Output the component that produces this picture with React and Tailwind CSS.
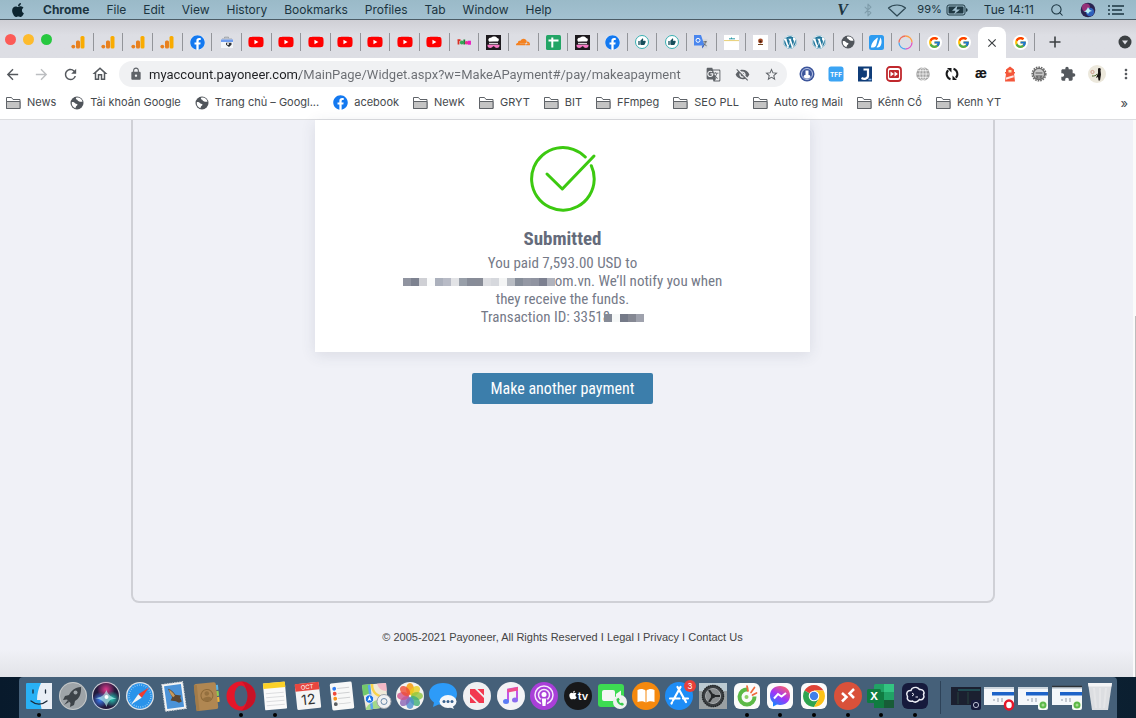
/**
 * App.jsx
 * Desktop view: menu bar, browser window with the payment confirmation, dock.
 */

import { Bluetooth, Search } from 'lucide-react'
import { FaApple, FaFacebook, FaWordpress, FaYoutube } from 'react-icons/fa'
import { FcGoogle } from 'react-icons/fc'
import { SiCloudflare } from 'react-icons/si'
import {
  MdArrowBack,
  MdArrowForward,
  MdClose,
  MdExtension,
  MdGTranslate,
  MdLock,
  MdMoreVert,
  MdOutlineHome,
  MdRefresh,
  MdStarOutline,
  MdThumbUp,
  MdVisibilityOff,
} from 'react-icons/md'

/* ---------- small icons ---------- */

const Analytics = () => (
  <svg viewBox="0 0 14 14" className="size-3.5">
    <rect x="9.5" y="1" width="4" height="12.5" rx="1.5" fill="#f9ab00" />
    <rect x="5" y="5.5" width="4" height="8" rx="1.5" fill="#e8801e" />
    <circle cx="2.3" cy="11.6" r="1.9" fill="#e8801e" />
  </svg>
)

const Facebook = () => (
  <span className="rounded-full bg-white">
    <FaFacebook className="size-[15px] text-[#1479f0]" />
  </span>
)

const StoreBag = () => (
  <svg viewBox="0 0 14 14" className="size-3.5">
    <path d="M4.500 3.500V2.200h4v1.300" fill="none" stroke="#9aa0a6" strokeWidth="1" />
    <path d="M1 5h12v8H1z" fill="#f4f6f8" />
    <path d="M2 3.200h10v1.300H2z" fill="#b6bcc4" />
    <path d="M1 4.500h12v2.500H1z" fill="#6f9df0" />
    <path d="M6 7.800h5.500v2L9 12 6 9.800z" fill="#30343a" />
    <circle cx="8" cy="9" r="1" fill="#fff" />
  </svg>
)

const Youtube = () => (
  <span className="relative flex items-center justify-center">
    <span className="absolute size-1.5 bg-white" />
    <FaYoutube className="relative size-4 text-[#ff0000]" />
  </span>
)

const ColorWord = () => (
  <svg viewBox="0 0 14 14" className="size-3.5">
    <path d="M1.500 4.500v5M.5 5.200h3" stroke="#d93025" strokeWidth="1.800" />
    <circle cx="4.800" cy="7.500" r="1.900" fill="#34a853" />
    <path d="M7.300 4.500v5" stroke="#188038" strokeWidth="1.800" />
    <circle cx="9.500" cy="7.700" r="1.800" fill="#e9348a" />
    <path d="M11.500 9.800V6.500h1.600v3.300" fill="none" stroke="#e91ec0" strokeWidth="1.700" />
  </svg>
)

const ChefFace = () => (
  <svg viewBox="0 0 15 15" className="size-[15px]">
    <rect width="15" height="15" fill="#1d1a1e" />
    <path d="M3 6.500C1.500 4.500 3 2.500 5 2.800 6.500 1 10.500 1 11 3c2.200.1 2.300 2.400 1 3.500z" fill="#fff" />
    <path d="M3 6.500l9 1v1.800H3z" fill="#e9e6ea" />
    <path d="M3 7.600h9" stroke="#1d1a1e" strokeWidth="1" />
    <path d="M1.500 9.800h12v1.200c-.5 2.500-4.300 2.500-5.300.3H7c-1 2.200-5 2.200-5.500-.3z" fill="#f779c4" />
  </svg>
)

const Sheet = () => (
  <svg viewBox="0 0 15 15" className="size-[15px]">
    <rect width="15" height="15" rx="1.500" fill="#23a566" />
    <path d="M2.500 5.600h10M6.300 2.500v10" stroke="#fff" strokeWidth="2" />
  </svg>
)

const LikeBadge = () => (
  <span className="flex size-3.5 items-center justify-center rounded-full border border-[#38b1b3] bg-white">
    <MdThumbUp className="size-2 text-[#164e5c]" />
  </span>
)

const Translate = () => (
  <svg viewBox="0 0 14 14" className="size-3.5">
    <path d="M6 4h7.500v9.500H8z" fill="#d5d8dc" />
    <path d="M0 0h7l3.500 10.500H0z" fill="#4a86ee" />
    <circle cx="4" cy="5.300" r="2" fill="none" stroke="#fff" strokeWidth="1" />
    <path d="M8 13.500l.3-3h2.200z" fill="#2a56c6" />
    <path d="M9.300 6.800h3.700M11.300 6v1c0 1.800-.8 2.800-2 3.700M10 8.500c.6 1 1.400 1.800 2.600 2.300" fill="none" stroke="#5f6368" strokeWidth=".9" />
  </svg>
)

const PageThumb = () => (
  <svg viewBox="0 0 15 15" className="size-[15px]">
    <rect width="15" height="15" fill="#fff" />
    <path d="M5 3.800h6M7.500 2.500v1.500" fill="none" stroke="#2f9aa8" strokeWidth="1" />
    <path d="M0 5.600h15" stroke="#e8cf74" strokeWidth="1" />
  </svg>
)

const Emblem = () => (
  <svg viewBox="0 0 15 15" className="size-[15px]">
    <rect width="15" height="15" fill="#fff" />
    <circle cx="7.500" cy="6" r="2.400" fill="#a34a26" />
    <circle cx="7.500" cy="6.500" r="1.100" fill="#3a1c10" />
    <path d="M5 9.500h5" stroke="#70431e" strokeWidth="1" />
  </svg>
)

const Wordpress = () => (
  <span className="rounded-full bg-white">
    <FaWordpress className="size-3.5 text-[#21759b]" />
  </span>
)

const Globe = () => (
  <svg viewBox="0 0 14 14" className="size-3.5 shrink-0">
    <circle cx="7" cy="7" r="6.500" fill="#50555b" />
    <path d="M1.800 6.200c1.700-.4 2.600.5 3.500 1.200 1 .5 2.200.4 2.200 1.300 0 .9-1.500 1.200-1.700 2.300l-.4 1.200C3 11.400 1.300 9 1.800 6.200z" fill="#fff" />
    <path d="M6.500 1.600c-.9.8-.8 1.800.2 1.900.9.100.6 1.100 1.500 1.400.9.200 1.300.9 2.200.9h2.100c-.5-2.700-3-4.800-6-4.200z" fill="#fff" />
  </svg>
)

const BlueSwoosh = () => (
  <svg viewBox="0 0 15 15" className="size-[15px]">
    <rect width="15" height="15" rx="2.500" fill="#2d9bf0" />
    <path d="M2 12.500C2 9 5 4.500 9 2.500L7.500 9c-.4 2-1.500 3.500-3.500 3.500z" fill="#fff" />
    <path d="M9 10l2.500-7.500c1.500 2.500 1.500 7-.5 9-1 1-3 1.200-3.500.8z" fill="#fff" />
  </svg>
)

const Ring = () => (
  <svg viewBox="0 0 15 15" className="size-[15px]" fill="none" strokeWidth="1.300">
    <path d="M7.500 1A6.500 6.500 0 0 1 14 7.500" stroke="#ff9f43" />
    <path d="M14 7.500A6.500 6.500 0 0 1 7.500 14" stroke="#e056c8" />
    <path d="M7.500 14A6.500 6.500 0 0 1 1 7.500" stroke="#4aa8f0" />
    <path d="M1 7.500A6.500 6.500 0 0 1 7.500 1" stroke="#f0705a" />
  </svg>
)

const Google = () => (
  <span className="flex size-[15px] items-center justify-center rounded-full bg-white">
    <FcGoogle className="size-[13px]" />
  </span>
)

const Cloudflare = () => <SiCloudflare className="size-3.5 text-[#f48120]" />

const Folder = () => (
  <svg viewBox="0 0 15 14" className="h-3.5 w-[15px] shrink-0">
    <path d="M.5 12.500v-11h5l1.500 2h7v9z" fill="#fff" stroke="#5f6368" strokeWidth="1" />
    <path d="M.5 5.500H14v7H.5z" fill="#c4c4c4" stroke="#5f6368" strokeWidth="1" />
  </svg>
)

const Siri = () => (
  <svg viewBox="0 0 16 16" className="size-4">
    <circle cx="8" cy="8" r="7.300" fill="#2a2350" />
    <circle cx="6" cy="5.500" r="4" fill="#a8347f" opacity=".85" />
    <circle cx="10" cy="10" r="4.200" fill="#2f6fd6" opacity=".8" />
    <path d="M3.500 9.500C6 9 7 7.500 8 5c1 2.500 2 3.500 4.500 4-2.500.2-3.500 1-4.500 3-.8-1.700-2-2.500-4.500-2.500z" fill="#b9f2f4" />
  </svg>
)

/* ---------- menu bar ---------- */

const menus = ['File', 'Edit', 'View', 'History', 'Bookmarks', 'Profiles', 'Tab', 'Window', 'Help']

const MenuBar = () => (
  <header className="flex h-5 items-center justify-between border-b border-[#4b5c66] bg-linear-to-b from-[#9abac8] to-[#a3c1d1] pr-3 pl-2.5 text-xs text-[#1b3440]">
    <nav className="flex items-center gap-[17px]">
      <button aria-label="Apple menu">
        <FaApple className="size-4 text-[#0d2530]" />
      </button>
      <button className="font-bold">Chrome</button>
      {menus.map((m) => (
        <button key={m}>{m}</button>
      ))}
    </nav>
    <div className="flex items-center">
      <span className="w-6 font-['Liberation_Serif',serif] text-base leading-4 font-bold italic">V</span>
      <Bluetooth className="mr-3 size-3.5 text-[#7f9dab]" strokeWidth={2} />
      <svg viewBox="0 0 20 14" className="mr-2.5 h-3.5 w-5" fill="none" stroke="#2e4854" strokeWidth="1.200">
        <path d="M1.500 5c4.500-4 12.500-4 17 0L10 13z" strokeLinejoin="round" />
      </svg>
      <span className="mr-1 text-[11px]">99%</span>
      <svg viewBox="0 0 22 12" className="mr-4 h-3 w-[22px]">
        <rect x="1" y="1" width="18" height="10" rx="2" fill="none" stroke="#1f3843" strokeWidth="1" />
        <rect x="2.500" y="2.500" width="15" height="7" rx="1" fill="#1f3843" />
        <path d="M20 4v4l1.500-1V5z" fill="#1f3843" />
        <path d="M11.500 1.500L6 6.700h3.500L8 10.500l6-5h-3.500z" fill="#a3c1d1" />
      </svg>
      <span className="mr-4">Tue 14:11</span>
      <Search className="mr-4 size-3.5" strokeWidth={1.800} />
      <span className="mr-3"><Siri /></span>
      <svg viewBox="0 0 16 12" className="h-3 w-4" stroke="#1b3440" strokeWidth="1.500">
        <path d="M0 2h2M0 6h2M0 10h2M4 2h12M4 6h10M4 10h12" />
      </svg>
    </div>
  </header>
)

/* ---------- tab strip ---------- */

const wideTabs = [
  Analytics, Analytics, Analytics, Analytics, Facebook, StoreBag,
  Youtube, Youtube, Youtube, Youtube, Youtube, Youtube, Youtube,
  ColorWord, ChefFace, Cloudflare, Sheet, ChefFace, Facebook,
  LikeBadge, LikeBadge, Translate, PageThumb, Emblem,
]
const narrowTabs = [Wordpress, Wordpress, Globe, BlueSwoosh, Ring, Google, Google, null, Google]

const Tab = ({ icon: Icon, last }) =>
  Icon ? (
    <button
      aria-label="Tab"
      className={`flex h-[18px] min-w-0 flex-1 items-center justify-center border-r ${last ? 'border-transparent' : 'border-[#93959a]'}`}
    >
      <Icon />
    </button>
  ) : (
    <button
      aria-label="Close tab"
      className="flex h-[31px] min-w-0 flex-1 items-center justify-center self-end rounded-t-lg bg-white text-[#3c4043]"
    >
      <MdClose className="size-3.5" />
    </button>
  )

const TabStrip = () => (
  <div className="flex h-[38px] items-end bg-linear-to-b from-[#cfcfd5] to-[#dddee4] to-40%">
    <div className="flex h-[38px] w-16 shrink-0 items-center gap-[7px] pl-[5px]">
      <button aria-label="Close window" className="size-[11px] rounded-full bg-[#fc5b57]" />
      <button aria-label="Minimize window" className="size-[11px] rounded-full bg-[#fdbb2d]" />
      <button aria-label="Zoom window" className="size-[11px] rounded-full bg-[#27c840]" />
    </div>
    <div className="flex h-8 grow-[712] basis-0 items-center">
      {wideTabs.map((icon, i) => (
        <Tab key={i} icon={icon} />
      ))}
    </div>
    <div className="flex h-8 grow-[259] basis-0 items-center">
      {narrowTabs.map((icon, i) => (
        <Tab key={i} icon={icon} last={i === 6} />
      ))}
    </div>
    <div className="flex h-8 w-[101px] shrink-0 items-center justify-between pr-1 pl-3.5">
      <button aria-label="New tab">
        <svg viewBox="0 0 12 12" className="size-3" stroke="#3c4043" strokeWidth="1.600">
          <path d="M6 .5v11M.5 6h11" />
        </svg>
      </button>
      <button aria-label="Search tabs">
        <svg viewBox="0 0 14 14" className="size-3.5">
          <circle cx="7" cy="7" r="6.500" fill="#3c4043" />
          <path d="M4 5.500h6L7 9.500z" fill="#dddee4" />
        </svg>
      </button>
    </div>
  </div>
)

/* ---------- toolbar ---------- */

const extensions = [
  {
    name: 'Touch blocker',
    art: (
      <>
        <circle cx="8" cy="8" r="7.500" fill="#3c559b" />
        <circle cx="8" cy="8" r="5.500" fill="none" stroke="#b9c5e6" strokeWidth="1" />
        <path d="M4.500 10.500l1-1.500h1V4.500h3V9h1l1 1.500c-1 2.800-6 2.800-7 0z" fill="#fff" />
      </>
    ),
  },
  {
    name: 'TFF',
    art: (
      <>
        <rect x=".5" y=".5" width="15" height="15" rx="2.500" fill="#3ba4f4" />
        <text x="8" y="10.500" textAnchor="middle" fontSize="6.500" fontWeight="700" fill="#fff">TFF</text>
      </>
    ),
  },
  {
    name: 'J2',
    art: (
      <>
        <rect x="1" y=".5" width="14" height="15" fill="#0f3c78" />
        <path d="M6.500 3.500h4.500v6c0 3.500-4 4-6.500 2.500" fill="none" stroke="#fff" strokeWidth="2.200" />
        <path d="M11.500 13.500h3" stroke="#7db0e8" strokeWidth="1.500" />
      </>
    ),
  },
  {
    name: 'Fast forward',
    art: (
      <>
        <rect x="1" y="1" width="14" height="14" rx="3" fill="#fff" stroke="#c0282d" strokeWidth="1.800" />
        <rect x="3" y="4" width="10" height="8" rx="1" fill="#c0282d" />
        <path d="M4.500 5.500L8 8l-3.500 2.500zM8.500 5.500L12 8l-3.500 2.500z" fill="#fff" />
      </>
    ),
  },
  {
    name: 'Web',
    art: (
      <g fill="none" stroke="#fff" strokeWidth=".7">
        <circle cx="8" cy="8" r="6.800" fill="#a3a3a3" stroke="none" />
        <ellipse cx="8" cy="8" rx="3.200" ry="6.800" />
        <path d="M1.500 8h13M8 1v14M2.500 4.700h11M2.500 11.300h11" />
      </g>
    ),
  },
  {
    name: 'Sync',
    art: (
      <g fill="none" stroke="#17181a" strokeWidth="2">
        <path d="M6.500 13.200A5.400 5.400 0 0 1 4.200 4.200M9.500 2.800A5.400 5.400 0 0 1 11.800 11.800" />
        <path d="M3 2h4.500v4.500zM13 14H8.500V9.500z" fill="#17181a" stroke="none" />
      </g>
    ),
  },
  {
    name: 'ae',
    art: <text x="8" y="12" textAnchor="middle" fontSize="13" fontWeight="800" fill="#17181a">æ</text>,
  },
  {
    name: 'Lighthouse',
    art: (
      <>
        <path d="M8 .5L12 3.500V6h1v1.500h-1L13 15.500H3L4 7.500H3V6h1V3.500z" fill="#f4563a" />
        <path d="M6.500 4h3v2.500h-3z" fill="#fde3b0" />
        <path d="M4 11.500l7.500-2.300.3 2-8 2.500z" fill="#fff" opacity=".85" />
      </>
    ),
  },
  {
    name: 'Gear',
    art: (
      <g fill="none" stroke="#6a6a6a">
        <circle cx="8" cy="8" r="6.800" strokeWidth="1.600" strokeDasharray="1.600 1" />
        <circle cx="8" cy="8" r="5.600" fill="#c9c9c9" strokeWidth="1.300" />
        <path d="M4.500 7h7M4.500 10h7M6 10.500v1.500h4v-1.500" stroke="#555" strokeWidth="1.200" />
      </g>
    ),
  },
]

const UrlBar = () => (
  <div className="flex h-[26px] min-w-0 flex-1 items-center rounded-full bg-[#f0f1f3] pr-2 pl-2.5 text-[#5f6368]">
    <MdLock className="size-3.5 shrink-0" />
    <input
      aria-label="Address"
      className="ml-1.5 h-5 min-w-0 flex-1 bg-linear-to-r from-[#202124] from-[151px] to-[#6a6d72] to-[151px] bg-clip-text font-['Roboto',sans-serif] text-[13px] text-transparent outline-none"
      defaultValue="myaccount.payoneer.com/MainPage/Widget.aspx?w=MakeAPayment#/pay/makeapayment"
    />
    <div className="flex items-center gap-3.5">
      <button aria-label="Translate this page"><MdGTranslate className="size-[15px]" /></button>
      <button aria-label="Cookies blocked"><MdVisibilityOff className="size-[15px]" /></button>
      <button aria-label="Bookmark this page"><MdStarOutline className="size-[15px]" /></button>
    </div>
  </div>
)

const Toolbar = () => (
  <div className="flex h-8 items-center bg-white text-[#54585d]">
    <div className="flex items-center gap-3 pr-2.5 pl-1">
      <button aria-label="Back"><MdArrowBack className="size-[17px]" /></button>
      <button aria-label="Forward"><MdArrowForward className="size-[17px] text-[#bcbec1]" /></button>
      <button aria-label="Reload"><MdRefresh className="size-[17px]" /></button>
      <button aria-label="Home"><MdOutlineHome className="size-[18px]" /></button>
    </div>
    <UrlBar />
    <div className="flex items-center gap-[13px] pr-0.5 pl-3">
      {extensions.map(({ name, art }) => (
        <button key={name} aria-label={name}>
          <svg viewBox="0 0 16 16" className="size-4">{art}</svg>
        </button>
      ))}
      <button aria-label="Extensions"><MdExtension className="size-4" /></button>
      <button aria-label="Profile">
        <svg viewBox="0 0 18 18" className="-mx-px size-[18px]">
          <circle cx="9" cy="9" r="9" fill="#ece8dc" />
          <path d="M10 3.500c2-1.500 3.500.5 2.500 2l.5 4-1 6h-1.500L10 12l-2 1 2-5z" fill="#1a1613" />
          <circle cx="4.500" cy="7" r="1.600" fill="none" stroke="#c98a7a" strokeWidth=".8" />
          <path d="M4 11c2 0 4 0 5-2" stroke="#50682e" fill="none" />
        </svg>
      </button>
      <button aria-label="Menu"><MdMoreVert className="size-4" /></button>
    </div>
  </div>
)

/* ---------- bookmarks ---------- */

const bookmarks = [
  { label: 'News' },
  { label: 'Tài khoản Google', icon: Globe },
  { label: 'Trang chủ – Googl...', icon: Globe },
  { label: 'acebook', icon: Facebook },
  { label: 'NewK' },
  { label: 'GRYT' },
  { label: 'BIT' },
  { label: 'FFmpeg' },
  { label: 'SEO PLL' },
  { label: 'Auto reg Mail' },
  { label: 'Kênh Cổ' },
  { label: 'Kenh YT' },
]

const BookmarksBar = () => (
  <div className="flex h-[30px] items-center gap-3.5 border-b border-[#dcdde0] bg-white pr-2 pb-1 pl-1.5 text-[11px] text-[#45494d]">
    {bookmarks.map(({ label, icon: Icon = Folder }) => (
      <a key={label} href="#" className="flex items-center gap-1.5 whitespace-nowrap">
        <Icon />
        {label}
      </a>
    ))}
    <button aria-label="More bookmarks" className="ml-auto text-[13px] leading-4">»</button>
  </div>
)

/* ---------- page ---------- */

const Redacted = ({ cells }) => (
  <span className="inline-flex" aria-hidden="true">
    {cells.map((c, i) => (
      <span key={i} className="size-2" style={{ backgroundColor: c }} />
    ))}
  </span>
)

const emailCells = [
  '#9094a0', '#7d8290', '#cfd0d5', '#fafbfb', '#abb0bc', '#b8bbc6', '#e2e3e6', '#989fa9', '#878c98', '#888c97',
  '#dddee2', '#d6d8dd', '#f4f5f5', '#b8bcc3', '#868d99', '#9498a4', '#9094a1', '#7c8090', '#b0b3bd',
]
const idCells = ['#868b97', '#f6f8f8', '#757a88', '#858893', '#9fa2ad']

const PaymentPage = () => (
  <div className="flex flex-1 bg-[#f0f1f7]">
    <div className="flex flex-1 flex-col items-center bg-linear-to-t from-[#e2e3e8] to-[#f0f1f7] to-[28px] pr-2">
      <main className="flex w-full max-w-[864px] flex-1 flex-col items-center rounded-b-[8px] border-2 border-t-0 border-[#cfd0d6]">
        <section className="flex w-full max-w-[495px] flex-col items-center bg-white pt-[25px] pb-[26px] text-center font-['Roboto_Condensed','Liberation_Sans_Narrow',Roboto,sans-serif] text-[15px] leading-[18px] text-[#757a88] shadow-[0_3px_14px_rgba(60,65,90,0.12)]">
          <svg viewBox="0 0 68 68" className="size-[68px]" fill="none" stroke="#3cc910" strokeWidth="3" strokeLinecap="round" strokeLinejoin="round">
            <path d="M56.300 12A31.300 31.300 0 1 0 62.300 20.700" />
            <path d="M18 29l15.300 15L65 11" />
          </svg>
          <h1 className="mt-3.5 text-[19px] leading-6 font-bold text-[#656b7b]">Submitted</h1>
          <p className="mt-[3px]">
            <span className="block">You paid 7,593.00 USD to</span>
            <span className="block whitespace-nowrap"><Redacted cells={emailCells} />om.vn. We’ll notify you when</span>
            <span className="block">they receive the funds.</span>
            <span className="block">Transaction ID: 33518<span className="-ml-1.5"><Redacted cells={idCells} /></span></span>
          </p>
        </section>
        <button className="mt-[21px] h-[31px] rounded-[2px] bg-[#3c7eab] px-[18px] font-['Roboto_Condensed','Liberation_Sans_Narrow',Roboto,sans-serif] text-base text-white">
          Make another payment
        </button>
      </main>
      <footer className="pt-[26px] pb-8 font-['Liberation_Sans',Arial,sans-serif] text-[11px] leading-4 text-[#444]">
        © 2005-2021 Payoneer, All Rights Reserved I <a href="#">Legal</a> I <a href="#">Privacy</a> I <a href="#">Contact Us</a>
      </footer>
    </div>
    <div className="flex w-[3px] flex-col items-end bg-[#fafafa]">
      <div className="mt-[196px] w-px flex-1 bg-[#bdbdbd]" />
    </div>
  </div>
)

/* ---------- dock ---------- */

const dockApps = [
  {
    name: 'Finder',
    open: true,
    art: (
      <>
        <rect x="3" y="3" width="26" height="26" rx="1" fill="#29b1f5" />
        <path d="M18 3h11v26H18.500c-.8-3-1-6-1-9H14c0-6 1.500-12 4-17z" fill="#e9eef5" />
        <path d="M10 10v3M22.500 10v3M8 21c5 4 11 4 16 0" fill="none" stroke="#1b2a3a" strokeWidth="1.300" strokeLinecap="round" />
      </>
    ),
  },
  {
    name: 'Launchpad',
    art: (
      <>
        <circle cx="16" cy="16" r="14" fill="#9ea4a8" />
        <circle cx="16" cy="16" r="13.500" fill="none" stroke="#c5c9cb" />
        <path d="M24 7c-6 0-10 4-12 8l-4 1-2 4 4-.500 3.500 3.500-.5 4 4-2 1-4c4-2 6.500-7 6-14z" fill="#3d4348" />
        <circle cx="18.500" cy="12.500" r="2" fill="#9ea4a8" />
        <path d="M11 20l-4 5 5-3z" fill="#3d4348" />
      </>
    ),
  },
  {
    name: 'Siri',
    art: (
      <>
        <defs>
          <radialGradient id="siriPink"><stop offset="0" stopColor="#e0388c" /><stop offset="1" stopColor="#e0388c" stopOpacity="0" /></radialGradient>
          <radialGradient id="siriBlue"><stop offset="0" stopColor="#3a7cf0" /><stop offset="1" stopColor="#3a7cf0" stopOpacity="0" /></radialGradient>
          <radialGradient id="siriTeal"><stop offset="0" stopColor="#27c9b4" /><stop offset="1" stopColor="#27c9b4" stopOpacity="0" /></radialGradient>
        </defs>
        <circle cx="16" cy="16" r="14" fill="#d4d6dc" />
        <circle cx="16" cy="16" r="13" fill="#231a3c" />
        <circle cx="16" cy="9.500" r="9" fill="url(#siriPink)" />
        <circle cx="10" cy="20" r="8" fill="url(#siriBlue)" />
        <circle cx="22" cy="19" r="8" fill="url(#siriTeal)" />
        <path d="M5 18c5 0 9-2 11.500-8 1.500 5 5 7 10 9-5-.5-8 .5-10 8-2-6-6-8-11.500-9z" fill="#bdf7f5" opacity=".65" />
        <circle cx="16.500" cy="17" r="2" fill="#fff" />
      </>
    ),
  },
  {
    name: 'Safari',
    art: (
      <>
        <circle cx="16" cy="16" r="14" fill="#dfe3e8" />
        <circle cx="16" cy="16" r="12.700" fill="#2a93ea" />
        <circle cx="16" cy="16" r="11" fill="none" stroke="#bfe0fb" strokeWidth="1.500" strokeDasharray=".6 1.700" />
        <path d="M25 7.500L14.300 14.300l3.400 3.400z" fill="#f03b30" />
        <path d="M7 24.500l7.300-10.200 3.400 3.400z" fill="#f3f4f6" />
      </>
    ),
  },
  {
    name: 'Mail',
    art: (
      <g transform="rotate(-8 16 16)">
        <rect x="5.500" y="3" width="21" height="27" fill="#f4f5f5" stroke="#d8dadc" strokeDasharray="1.500 1" />
        <rect x="7.500" y="5" width="17" height="23" fill="#4b93d8" />
        <path d="M11 8c3 1 5 4 6.500 7l5.500 1.500-1 2 1 4-3 1-3-2-5-1.500 2-3z" fill="#5c4630" />
        <path d="M12 9c2 2 4 4 5 7l-2 1c-2-2-3-5-3-8z" fill="#c69a5c" />
      </g>
    ),
  },
  {
    name: 'Contacts',
    art: (
      <g transform="rotate(-6 16 16)">
        <path d="M24 6h4v5h-4z" fill="#5bb3e6" />
        <path d="M24 12h4v5h-4z" fill="#8ccf52" />
        <path d="M24 18h4v5h-4z" fill="#f3b735" />
        <rect x="4" y="3" width="22" height="27" rx="2" fill="#b08752" />
        <path d="M4 4h3v26H4z" fill="#a27b48" />
        <circle cx="16" cy="15.500" r="6" fill="none" stroke="#8d6938" />
        <circle cx="16" cy="13.500" r="2.300" fill="#94703f" />
        <path d="M11.500 19c1-3 8-3 9 0-2.500 3-6.500 3-9 0z" fill="#94703f" />
      </g>
    ),
  },
  {
    name: 'Opera',
    open: true,
    art: (
      <>
        <circle cx="16" cy="16" r="14.500" fill="#e5162a" />
        <path d="M16 1.500a14.500 14.500 0 0 1 0 29c8-3 8-26 0-29z" fill="#c81226" />
        <ellipse cx="16" cy="16" rx="6.500" ry="10.500" fill="#47607a" />
      </>
    ),
  },
  {
    name: 'Notes',
    open: true,
    art: (
      <g transform="rotate(-5 16 16)">
        <rect x="5" y="2.500" width="22" height="27" rx="1" fill="#fafafa" />
        <path d="M5 2.500h22V8H5z" fill="#fcd127" />
        <path d="M7 13h18M7 17h18M7 21h18M7 25h18" stroke="#dcdddf" strokeWidth="1" />
      </g>
    ),
  },
  {
    name: 'Calendar',
    art: (
      <g transform="rotate(-6 16 16)">
        <rect x="4" y="3" width="24" height="26" rx="1.500" fill="#f5f5f5" />
        <path d="M4 3h24v7.500H4z" fill="#e8463e" />
        <text x="16" y="9" textAnchor="middle" fontSize="6" fill="#fff">OCT</text>
        <text x="16" y="24.500" textAnchor="middle" fontSize="14" fill="#333">12</text>
      </g>
    ),
  },
  {
    name: 'Reminders',
    art: (
      <g transform="rotate(-6 16 16)">
        <rect x="5" y="2.500" width="22" height="27" rx="1.500" fill="#f8f8f8" />
        <path d="M12 8h12M12 13h12M12 18h12M12 23.500h12" stroke="#cfd0d2" />
        <circle cx="9" cy="8" r="1.900" fill="#2f7bf0" />
        <circle cx="9" cy="13" r="1.900" fill="#ef4a3c" />
        <circle cx="9" cy="18" r="1.900" fill="#f7941e" />
        <circle cx="9" cy="23.500" r="1.900" fill="#5b5f63" />
      </g>
    ),
  },
  {
    name: 'Maps',
    art: (
      <g>
        <path d="M2 5l24-2 2 24-22 3z" fill="#efe9d8" />
        <path d="M2 5l8-1 1 9-8 3z" fill="#72c96b" />
        <path d="M17 3.800l9-.8.8 8c-5 0-8-2-9.800-7.200z" fill="#f3b8c6" />
        <path d="M6 28c5-8 14-9 21-9l1 8-22 3z" fill="#a4d98a" />
        <path d="M12 4c0 9 5 13 16 14" fill="none" stroke="#f9d34a" strokeWidth="2.500" />
        <path d="M9 5c1 8 2 16 3 24" fill="none" stroke="#5aa5f0" strokeWidth="2.500" />
        <circle cx="9.500" cy="19" r="4.200" fill="#1a73e8" stroke="#fff" strokeWidth=".8" />
        <path d="M9.500 16l2 5-2-1-2 1z" fill="#fff" />
        <circle cx="24" cy="21.500" r="7" fill="#f0f1f3" stroke="#9fa5ac" />
        <circle cx="24" cy="21.500" r="3" fill="none" stroke="#6c8cab" />
      </g>
    ),
  },
  {
    name: 'Photos',
    art: (
      <>
        <circle cx="16" cy="16" r="14" fill="#f3f3f1" />
        <ellipse cx="16" cy="9" rx="4" ry="6" fill="#f7a21b" opacity=".9" />
        <ellipse cx="16" cy="9" rx="4" ry="6" fill="#e8cf1f" opacity=".8" transform="rotate(45 16 16)" />
        <ellipse cx="16" cy="9" rx="4" ry="6" fill="#8fc63e" opacity=".8" transform="rotate(90 16 16)" />
        <ellipse cx="16" cy="9" rx="4" ry="6" fill="#3fae78" opacity=".8" transform="rotate(135 16 16)" />
        <ellipse cx="16" cy="9" rx="4" ry="6" fill="#4b8fd0" opacity=".8" transform="rotate(180 16 16)" />
        <ellipse cx="16" cy="9" rx="4" ry="6" fill="#8a63b5" opacity=".8" transform="rotate(225 16 16)" />
        <ellipse cx="16" cy="9" rx="4" ry="6" fill="#d0508b" opacity=".8" transform="rotate(270 16 16)" />
        <ellipse cx="16" cy="9" rx="4" ry="6" fill="#ee4b36" opacity=".8" transform="rotate(315 16 16)" />
      </>
    ),
  },
  {
    name: 'Messages',
    art: (
      <>
        <path d="M16 3c8 0 14 4.500 14 11s-6 11-14 11c-1.500 0-3-.2-4.500-.5L6 27l1-4.500C4 20.500 2 17.500 2 14 2 7.500 8 3 16 3z" fill="#2d9bf8" />
        <ellipse cx="21" cy="21.500" rx="8.500" ry="6.500" fill="#f5f7fa" />
        <path d="M25 25l2 4-5-2z" fill="#f5f7fa" />
        <circle cx="17" cy="21.500" r="1.500" fill="#37618d" />
        <circle cx="21" cy="21.500" r="1.500" fill="#37618d" />
        <circle cx="25" cy="21.500" r="1.500" fill="#37618d" />
      </>
    ),
  },
  {
    name: 'News',
    art: (
      <>
        <circle cx="16" cy="16" r="14" fill="#f0f0f2" />
        <path d="M9 9h5l9 9v5h-5l-9-9z" fill="#f2384f" />
        <path d="M16.500 9H23v6.500zM9 16.500L15.500 23H9z" fill="#f2384f" />
      </>
    ),
  },
  {
    name: 'Music',
    art: (
      <>
        <circle cx="16" cy="16" r="14" fill="#f3f3f6" />
        <path d="M13 21V9.500L22 8v11.500" fill="none" stroke="#c455e8" strokeWidth="2" />
        <path d="M12.500 9L23 7v3.500l-10.500 2z" fill="#f0508c" />
        <ellipse cx="11" cy="21.500" rx="3" ry="2.500" fill="#5a7cf5" />
        <ellipse cx="20" cy="20" rx="3" ry="2.500" fill="#8b6cf0" />
      </>
    ),
  },
  {
    name: 'Podcasts',
    art: (
      <>
        <circle cx="16" cy="16" r="14" fill="#a93fd8" />
        <g fill="none" stroke="#f5e9fb" strokeWidth="1.500">
          <circle cx="16" cy="15" r="9" />
          <circle cx="16" cy="15" r="5.500" />
        </g>
        <path d="M12.500 19h7l-1 8h-5z" fill="#a93fd8" />
        <circle cx="16" cy="14.500" r="2.500" fill="#fff" />
        <path d="M13.800 18.500h4.400l-.7 7.500h-3z" fill="#fff" />
      </>
    ),
  },
  {
    name: 'TV',
    art: (
      <>
        <circle cx="16" cy="16" r="14" fill="#17181a" />
        <FaApple x="6" y="10" size="10" color="#fff" />
        <text x="21" y="20" textAnchor="middle" fontSize="11" fontWeight="600" fill="#fff">tv</text>
      </>
    ),
  },
  {
    name: 'FaceTime',
    art: (
      <>
        <rect x="2" y="4" width="26" height="23" rx="3" fill="#3ddb52" />
        <rect x="6" y="10" width="13" height="11" rx="2" fill="#f4f6f5" />
        <path d="M20 14l5-3.500v10L20 17z" fill="#f4f6f5" />
        <circle cx="24" cy="22" r="7" fill="#eef2ef" />
        <path d="M20.500 19c0 4 3 6.500 6.500 6.500l1-1.500-2-1.500-1.200.8c-1-.6-1.700-1.500-2-2.500l1-1-1.300-2z" fill="#35c94a" />
      </>
    ),
  },
  {
    name: 'Books',
    art: (
      <>
        <circle cx="16" cy="16" r="14" fill="#f5890e" />
        <path d="M7.500 10c3-1.500 6-1 8 .5v12c-2-1.500-5-1.800-8-.5zM24.500 10c-3-1.500-6-1-8 .5v12c2-1.500 5-1.800 8-.5z" fill="#fff" />
      </>
    ),
  },
  {
    name: 'App Store',
    badge: '3',
    art: (
      <>
        <circle cx="16" cy="16" r="14" fill="#1e8df6" />
        <path d="M17.500 7L10 20.500M14.500 7L23 22M7 18.500h9.500M20 18.500h5M9 22.500l-.5 1" fill="none" stroke="#fff" strokeWidth="2.200" strokeLinecap="round" />
      </>
    ),
  },
  {
    name: 'System Preferences',
    art: (
      <>
        <rect x="2" y="3" width="28" height="26" fill="#9aa0a2" />
        <path d="M2 3h28v8H2z" fill="#bccbd2" />
        <circle cx="16" cy="16" r="11" fill="#3c4043" />
        <circle cx="16" cy="16" r="10.500" fill="none" stroke="#222527" strokeWidth="1.500" strokeDasharray="1.300 .9" />
        <circle cx="16" cy="16" r="7.500" fill="#8a8e90" stroke="#a8acae" strokeWidth="1" />
        <path d="M16 16h7M16 16l-4-6M16 16l-4 6" stroke="#25282a" strokeWidth="2.200" />
        <circle cx="16" cy="16" r="2.200" fill="#25282a" />
      </>
    ),
  },
  {
    name: 'Coc Coc',
    open: true,
    art: (
      <>
        <rect x="3" y="3" width="26" height="26" rx="6" fill="#fbfbfb" />
        <path d="M17 9.500a7.500 7.500 0 1 0 6.500 7" fill="none" stroke="#5cb947" strokeWidth="4" />
        <circle cx="15.500" cy="17" r="2" fill="#8fd06a" />
        <path d="M17 11l-1-5M20 12.500l3.500-5M21.500 15l4-2" stroke="#ef6a3c" strokeWidth="1.700" strokeLinecap="round" />
      </>
    ),
  },
  {
    name: 'Messenger',
    open: true,
    art: (
      <>
        <defs>
          <linearGradient id="messenger" x1=".2" y1="1" x2=".8" y2="0">
            <stop offset="0" stopColor="#0a8cff" />
            <stop offset=".5" stopColor="#a034fa" />
            <stop offset="1" stopColor="#ff6368" />
          </linearGradient>
        </defs>
        <rect x="3" y="3" width="26" height="26" rx="6" fill="#fbfbfb" />
        <path d="M16 6c6 0 10 4 10 9.500S22 25 16 25l-3-.4L9 26.500v-4C7 20.800 6 18.500 6 15.500 6 10 10 6 16 6z" fill="url(#messenger)" />
        <path d="M10 18.500l4-4.500 3.500 2.500L22 13" fill="none" stroke="#fff" strokeWidth="2" />
      </>
    ),
  },
  {
    name: 'Chrome',
    open: true,
    art: (
      <>
        <rect x="3" y="3" width="26" height="26" rx="6" fill="#fbfbfb" />
        <path d="M16 16L6.500 10.500A11 11 0 0 1 25.500 10.500H16z" fill="#e04336" />
        <path d="M16 16l-9.500-5.500A11 11 0 0 0 16 27l4.800-8.200z" fill="#2da44f" />
        <path d="M16 10.500h9.500A11 11 0 0 1 16 27l4.800-8.200z" fill="#fbc116" />
        <circle cx="16" cy="16" r="5.300" fill="#fff" />
        <circle cx="16" cy="16" r="4.200" fill="#3f80ea" />
      </>
    ),
  },
  {
    name: 'Remote Desktop',
    open: true,
    art: (
      <>
        <circle cx="16" cy="16" r="14" fill="#d9513a" />
        <path d="M10 13l4.500 4L10 21.500M22 9l-4.500 4.500L22 18" fill="none" stroke="#fff" strokeWidth="2.500" />
      </>
    ),
  },
  {
    name: 'Excel',
    open: true,
    art: (
      <>
        <rect x="9" y="4" width="20" height="24" rx="1.500" fill="#21a366" />
        <path d="M19 4h10v8H19z" fill="#33c481" />
        <path d="M9 12h10v8H9zM9 20h20v8H9z" fill="#107c41" />
        <path d="M19 20h10v8H19z" fill="#185c37" />
        <rect x="2" y="9" width="14" height="14" rx="1.500" fill="#107c41" />
        <text x="9" y="20" textAnchor="middle" fontSize="11" fontWeight="700" fill="#fff">X</text>
      </>
    ),
  },
  {
    name: 'Termius',
    open: true,
    art: (
      <>
        <rect x="3" y="3" width="26" height="26" rx="6" fill="#161a3c" />
        <path d="M13 8.500c3-2 6-1 7.500 1 3.500-.5 5.500 2.500 4 5 1.500 3-1 6-4 5-2 2.500-4.500 3.500-7 1.500-3.500 1-6-1.500-5-4.500C6.500 13.500 8.500 10 12 10.500z" fill="none" stroke="#eceef6" strokeWidth="1.500" />
        <path d="M13 13l2 1.500-2 1.500M16.500 17h2.500" fill="none" stroke="#eceef6" />
      </>
    ),
  },
]

const sheetWindow = (
  <>
    <rect x="1" y="7" width="30" height="18" fill="#f4f7fa" />
    <path d="M1 7h30v2H1z" fill="#cdd6de" />
    <path d="M9 12h22v3.500H9z" fill="#1d63c8" />
    <path d="M11 19v2M15 18v4M19 18v4" stroke="#b2bac4" strokeWidth="1.500" />
  </>
)

const cocMini = (
  <>
    <rect x="21" y="20" width="10" height="10" rx="2" fill="#f6faf4" />
    <circle cx="26" cy="25" r="2.500" fill="#a8dc92" stroke="#5cb947" strokeWidth="2" />
  </>
)

const dockWindows = [
  {
    name: 'Terminal window',
    art: (
      <>
        <rect x="1" y="7" width="30" height="18" fill="#1b2030" />
        <path d="M8 10h22" stroke="#2b8f8a" strokeWidth=".8" />
        <path d="M8 12v12M18 12v12" stroke="#29443f" />
        <rect x="21" y="20" width="10" height="10" rx="2" fill="#161a3c" />
        <circle cx="26" cy="25" r="2.600" fill="none" stroke="#b9bdd0" />
      </>
    ),
  },
  {
    name: 'Opera window',
    art: (
      <>
        {sheetWindow}
        <ellipse cx="26" cy="25" rx="4" ry="4.500" fill="#fff" stroke="#e5162a" strokeWidth="2.500" />
      </>
    ),
  },
  { name: 'Sheet window', art: <>{sheetWindow}{cocMini}</> },
  { name: 'Page window', art: <>{sheetWindow}<path d="M1 6.500h30" stroke="#2c3136" strokeWidth="1.500" />{cocMini}</> },
  {
    name: 'Trash',
    art: (
      <>
        <path d="M4 3h24l-4 27H8z" fill="#dcdee1" />
        <path d="M4 3h24l-.6 3.500H4.600z" fill="#f3f4f5" />
        <path d="M10 8l2 20M16 8v20M22 8l-2 20" stroke="#e4e5e7" strokeWidth="2" />
      </>
    ),
  },
]

const DockItem = ({ name, art, open, badge }) => (
  <button aria-label={name} className="relative flex min-w-0 flex-1 flex-col items-center pt-[3px]">
    <svg viewBox="0 0 32 32" className="size-8 shrink-0">{art}</svg>
    {open && <span className="mt-px size-1 rounded-full bg-black" />}
    {badge && (
      <span className="absolute top-[3px] right-0 flex size-3 items-center justify-center rounded-full bg-[#e8403a] text-[8px] leading-3 text-white">
        {badge}
      </span>
    )}
  </button>
)

const Dock = () => (
  <footer className="bg-linear-to-r from-[#081a2c] via-[#14304a] to-[#0b1f30] px-[19px]">
    <div className="flex h-[41px] rounded-t-[4px] bg-[#456079] pl-[3px]">
      <div className="flex grow-[910] basis-0">
        {dockApps.map((app) => (
          <DockItem key={app.name} {...app} />
        ))}
      </div>
      <div className="mx-2 my-1 w-px bg-[#2d4258]" />
      <div className="flex grow-[168] basis-0">
        {dockWindows.map((win) => (
          <DockItem key={win.name} {...win} />
        ))}
      </div>
    </div>
  </footer>
)

const App = () => (
  <div className="flex min-h-screen flex-col overflow-hidden font-['Inter',sans-serif]">
    <MenuBar />
    <TabStrip />
    <Toolbar />
    <BookmarksBar />
    <PaymentPage />
    <Dock />
  </div>
)

export default App
